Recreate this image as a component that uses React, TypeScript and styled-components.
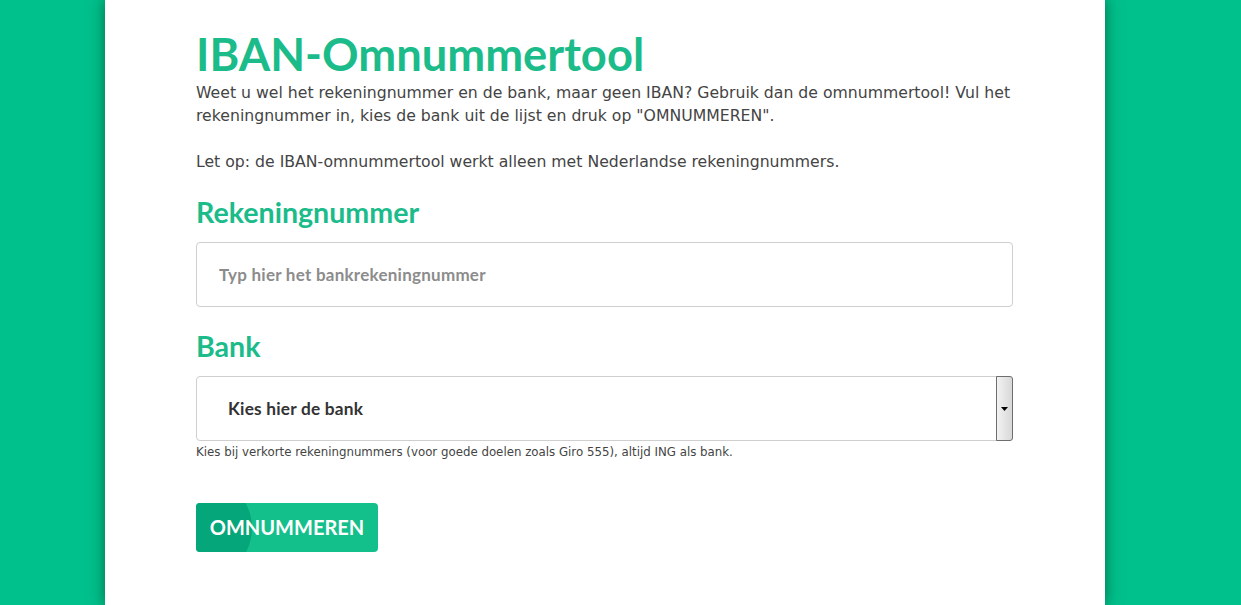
import React from "react";
import styled, { createGlobalStyle } from "styled-components";

const GlobalStyle = createGlobalStyle`
  html, body {
    margin: 0;
    padding: 0;
    background: #00c08b;
  }
  body {
    font-family: "DejaVu Sans", Verdana, sans-serif;
    color: #444;
  }
`;

const Page = styled.div`
  display: flex;
  padding-left: 105px;
  min-height: 605px;
`;

const Panel = styled.main`
  width: 909px;
  background: #fff;
  padding: 27px 0 0 91px;
  box-shadow: 0 0 14px rgba(0, 40, 20, 0.55);
  min-height: 578px;
`;

const Content = styled.div`
  width: 817px;
`;

const Title = styled.h1`
  margin: 0;
  font-family: Lato, "Open Sans", sans-serif;
  font-weight: 700;
  font-size: 45.3px;
  line-height: 54px;
  color: #1bbb8a;
`;

const Intro = styled.p`
  margin: 0;
  font-size: 15.7px;
  line-height: 23px;
  color: #444;
`;

const Label = styled.h2<{ $top: number }>`
  margin: ${(p) => p.$top}px 0 13px;
  font-family: Lato, "Open Sans", sans-serif;
  font-weight: 700;
  font-size: 28.6px;
  line-height: 34px;
  color: #1bbb8a;
`;

const TextInput = styled.input`
  display: block;
  box-sizing: border-box;
  width: 100%;
  height: 65px;
  border: 1px solid #cfcfcf;
  border-radius: 4px;
  padding: 0 22px;
  font-family: Lato, "Open Sans", sans-serif;
  font-weight: 700;
  font-size: 17px;
  letter-spacing: 0.25px;
  color: #333;
  outline: none;
  &::placeholder {
    color: #8c8c8c;
  }
`;

const SelectBox = styled.div`
  display: flex;
  align-items: center;
  box-sizing: border-box;
  width: 100%;
  height: 65px;
  border: 1px solid #cfcfcf;
  border-radius: 4px;
  padding: 0 0 0 31px;
  font-family: Lato, "Open Sans", sans-serif;
  font-weight: 700;
  font-size: 17.3px;
  letter-spacing: 0.2px;
  color: #333;
`;

const SelectText = styled.span`
  flex: 1;
`;

const ArrowButton = styled.div`
  align-self: stretch;
  width: 15px;
  display: flex;
  align-items: center;
  justify-content: center;
  border: 1px solid #6e6e6e;
  border-radius: 0 3px 3px 0;
  margin: -1px;
  background: linear-gradient(to right, #f2f2f2, #d8d8d8);
`;

const Hint = styled.p`
  margin: 4px 0 0;
  font-size: 11.8px;
  line-height: 14px;
  color: #444;
`;

const SubmitButton = styled.button`
  position: relative;
  overflow: hidden;
  margin-top: 44px;
  width: 182px;
  height: 49px;
  border: none;
  border-radius: 4px;
  background: #13bf8b;
  color: #fff;
  font-family: Lato, "Open Sans", sans-serif;
  font-weight: 700;
  font-size: 20px;
  padding-bottom: 3px;
  cursor: pointer;
  &::before {
    content: "";
    position: absolute;
    left: -110px;
    top: -40px;
    width: 166px;
    height: 130px;
    border-radius: 50%;
    background: #05a679;
  }
  span {
    position: relative;
  }
`;

export default function App() {
  return (
    <>
      <GlobalStyle />
      <Page>
        <Panel>
          <Content>
            <Title>IBAN-Omnummertool</Title>
            <Intro>
              Weet u wel het rekeningnummer en de bank, maar geen IBAN? Gebruik dan de
              omnummertool! Vul het rekeningnummer in, kies de bank uit de lijst en druk op
              "OMNUMMEREN".
              <br />
              <br />
              Let op: de IBAN-omnummertool werkt alleen met Nederlandse rekeningnummers.
            </Intro>
            <Label $top={22}>Rekeningnummer</Label>
            <TextInput type="text" placeholder="Typ hier het bankrekeningnummer" />
            <Label $top={22}>Bank</Label>
            <SelectBox>
              <SelectText>Kies hier de bank</SelectText>
              <ArrowButton>
                <svg width="7" height="4" viewBox="0 0 7 4">
                  <path d="M0 0h7L3.5 4z" fill="#000" />
                </svg>
              </ArrowButton>
            </SelectBox>
            <Hint>
              Kies bij verkorte rekeningnummers (voor goede doelen zoals Giro 555), altijd ING
              als bank.
            </Hint>
            <SubmitButton>
              <span>OMNUMMEREN</span>
            </SubmitButton>
          </Content>
        </Panel>
      </Page>
    </>
  );
}
